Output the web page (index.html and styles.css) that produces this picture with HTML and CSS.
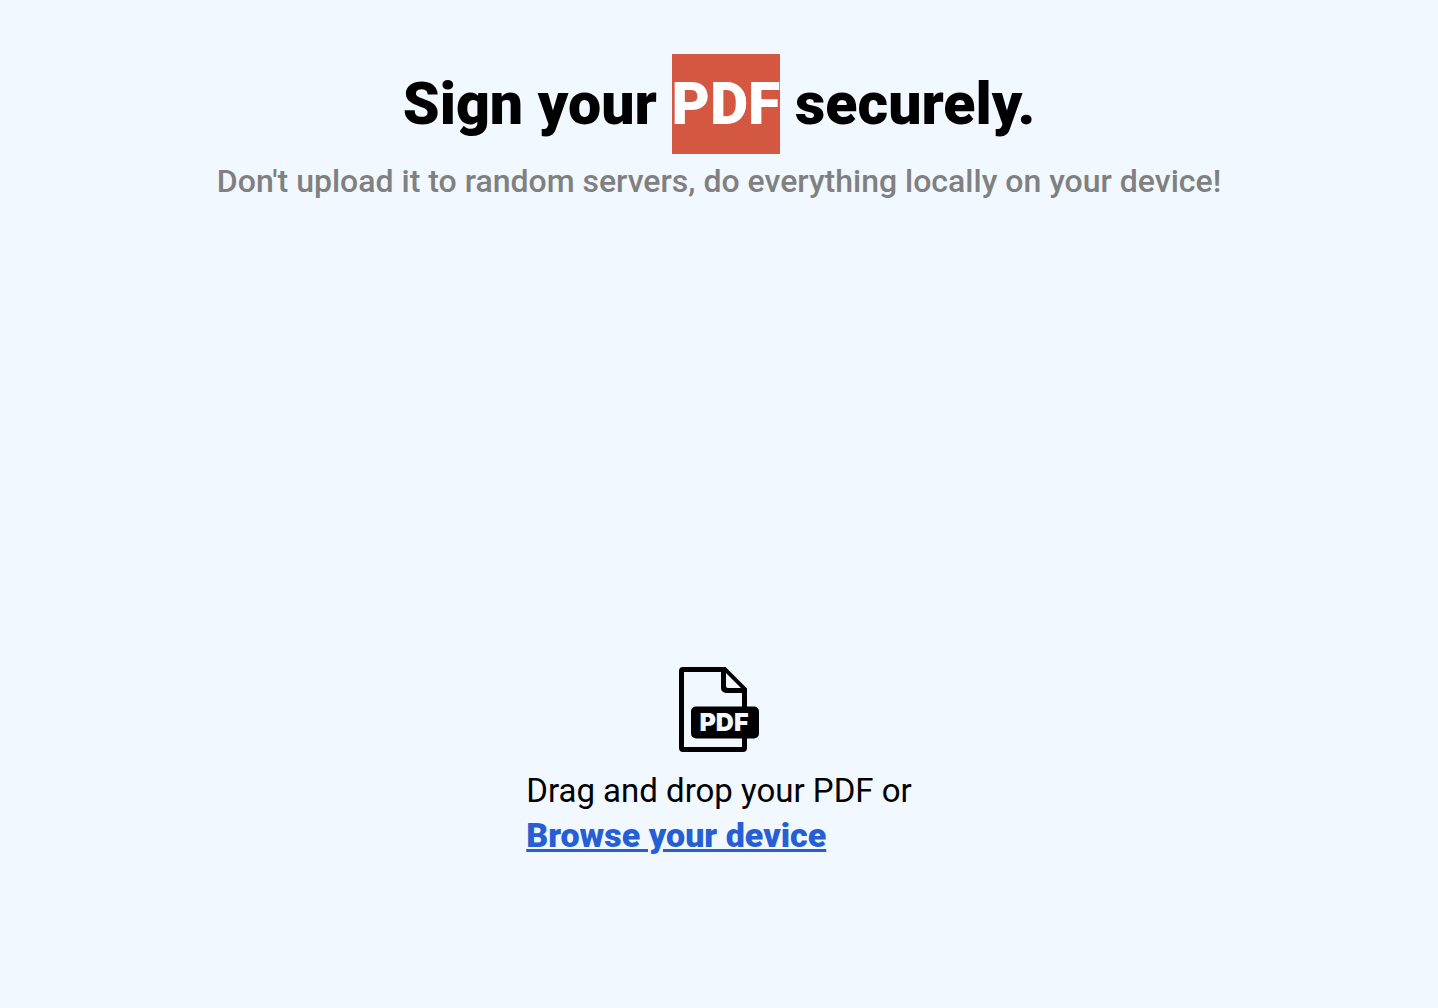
FILE: index.html
```
<!DOCTYPE html>
<html lang="en">
<head>
  <meta charset="UTF-8" />
  <meta name="viewport" content="width=device-width, initial-scale=1.0" />
  <title>Sign your PDF securely</title>
  <link rel="stylesheet" href="styles.css">
</head>
<body>
  <header class="intro">
    <h1>Sign your <span class="highlight">PDF</span> securely.</h1>
    <p class="tagline">Don't upload it to random servers, do everything locally on your device!</p>
  </header>

  <main class="dropzone">
    <svg class="pdf-icon" viewBox="0 0 80 85" role="img" aria-label="PDF">
      <!-- page outline and folded corner -->
      <path fill-rule="evenodd" d="M4 0H46.500L68 21.500V40H63V26H47a5 5 0 0 1-5-5V5H5V80H63V71H68V81a4 4 0 0 1-4 4H4a4 4 0 0 1-4-4V4a4 4 0 0 1 4-4ZM47 6V19a2 2 0 0 0 2 2H62Z" />
      <rect x="12" y="39.500" width="68" height="32" rx="5" />
      <text x="45" y="64" text-anchor="middle" class="pdf-icon-text">PDF</text>
    </svg>
    <div class="prompt">
      <p>Drag and drop your PDF or</p>
      <a href="#" class="browse">Browse your device</a>
    </div>
  </main>
</body>
</html>
```

FILE: styles.css
```
* {
  box-sizing: border-box;
  margin: 0;
  padding: 0;
}
body {
  min-height: 100vh;
  display: flex;
  flex-direction: column;
  background: #f1f8ff;
  color: #000;
  font-family: Roboto, 'Liberation Sans', sans-serif;
  font-size: 33px;
}
.intro {
  padding-top: 54px;
  text-align: center;
}
h1 {
  font-size: 59px;
  font-weight: 900;
  line-height: 100px;
}
.highlight {
  display: inline-block;
  background: #d45742;
  color: white;
}
.tagline {
  color: gray;
  font-size: 32px;
  font-weight: 500;
  line-height: 44px;
  padding: 5px 16px;
}
.dropzone {
  flex: 1;
  display: flex;
  flex-direction: column;
  align-items: center;
  justify-content: flex-end;
  gap: 17px;
  padding-bottom: 150px;
}
.pdf-icon {
  width: 80px;
}
.pdf-icon-text {
  fill: #f1f8ff;
  font-family: Inter, 'Liberation Sans', sans-serif;
  font-size: 25px;
  font-weight: 900;
}
.prompt {
  line-height: 44px;
}
.browse {
  color: #265fd3;
  font-size: 34px;
  font-weight: 900;
}
```
